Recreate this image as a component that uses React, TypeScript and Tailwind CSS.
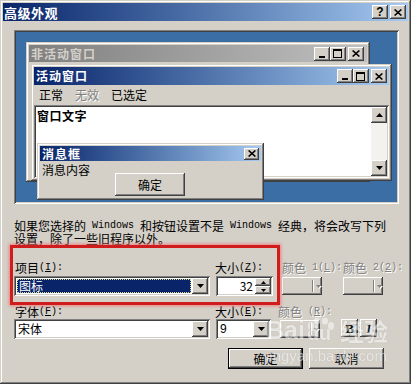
import React from "react";

const F = "font-['Noto_Sans_CJK_SC',sans-serif]";
const MONO = "font-['Liberation_Mono',monospace] text-[10px] leading-none whitespace-pre";
const RAISED =
  "shadow-[inset_-1px_-1px_#404040,inset_1px_1px_#ffffff,inset_-2px_-2px_#808080,inset_2px_2px_#d4d0c8]";
const SUNKEN =
  "shadow-[inset_1px_1px_#808080,inset_-1px_-1px_#ffffff,inset_2px_2px_#404040,inset_-2px_-2px_#d4d0c8]";
const WIN =
  "shadow-[inset_-1px_-1px_#404040,inset_1px_1px_#d4d0c8,inset_-2px_-2px_#808080,inset_2px_2px_#ffffff]";
const DIS = "text-[#808080] [text-shadow:1px_1px_0_#ffffff]";

function M({ children }: { children: React.ReactNode }) {
  return <span className={MONO}>{children}</span>;
}

function Tri({ dir = "down", color = "#000", w = 7, h = 4 }: { dir?: string; color?: string; w?: number; h?: number }) {
  const pts = dir === "down" ? `0,0 ${w},0 ${w / 2},${h}` : `${w / 2},0 ${w},${h} 0,${h}`;
  return (
    <svg width={w} height={h} viewBox={`0 0 ${w} ${h}`} className="block">
      <polygon points={pts} fill={color} />
    </svg>
  );
}

function CloseGlyph() {
  return (
    <svg width="8" height="7" viewBox="0 0 8 7" className="block">
      <path d="M0.6 0.5 L7.4 6.5 M7.4 0.5 L0.6 6.5" stroke="#000" strokeWidth="1.6" fill="none" />
    </svg>
  );
}

function CapBtn({ kind, className = "" }: { kind: "min" | "max" | "close" | "help"; className?: string }) {
  return (
    <div className={`${RAISED} bg-[#d4d0c8] w-[16px] h-[14px] flex items-center justify-center shrink-0 ${className}`}>
      {kind === "close" && <CloseGlyph />}
      {kind === "min" && <div className="w-[6px] h-[2px] bg-black mt-[6px] -ml-[1px]" />}
      {kind === "max" && <div className="w-[9px] h-[9px] border border-black border-t-2 -ml-[1px]" />}
      {kind === "help" && (
        <span className="font-['Liberation_Sans',sans-serif] font-bold text-[12px] leading-none text-black -mt-[1px]">?</span>
      )}
    </div>
  );
}

function Combo({ children, className = "" }: { children: React.ReactNode; className?: string }) {
  return (
    <div className={`${SUNKEN} bg-white p-[2px] flex h-[20px] shrink-0 ${className}`}>
      <div className="flex-1 flex items-center min-w-0">{children}</div>
      <div className={`${RAISED} bg-[#d4d0c8] w-[16px] h-full flex items-center justify-center`}>
        <Tri />
      </div>
    </div>
  );
}

function ColorBtn({ className = "" }: { className?: string }) {
  return (
    <div className={`${RAISED} bg-[#d4d0c8] w-[40px] h-[18px] flex items-center shrink-0 ${className}`}>
      <div className="w-[30px]" />
      <div className="w-[1px] h-[12px] bg-[#808080] shadow-[1px_0_0_#ffffff]" />
      <div className="ml-[3px] relative">
        <div className="absolute left-[1px] top-[1px]">
          <Tri color="#ffffff" w={5} h={3} />
        </div>
        <div className="relative">
          <Tri color="#808080" w={5} h={3} />
        </div>
      </div>
    </div>
  );
}

function Btn({ children, def = false }: { children: React.ReactNode; def?: boolean }) {
  return (
    <div className={`${def ? "border border-black" : ""} w-[75px] h-[21px] shrink-0`}>
      <div className={`${RAISED} bg-[#d4d0c8] w-full h-full flex items-center justify-center text-[12px] leading-none`}>
        {children}
      </div>
    </div>
  );
}

export default function App() {
  return (
    <div className={`relative w-[411px] h-[384px] overflow-hidden bg-[#d4d0c8] p-[3px] ${WIN} ${F} text-[12px] text-black`}>
      {/* Title bar */}
      <div className="h-[18px] flex items-center bg-linear-to-r from-[#0a246a] to-[#a6caf0] pl-[1px] pr-[2px]">
        <span className="text-white font-bold text-[13px] leading-none tracking-[0.5px]">高级外观</span>
        <div className="ml-auto flex gap-[2px]">
          <CapBtn kind="help" />
          <CapBtn kind="close" />
        </div>
      </div>

      <div className="pl-[11px]">
        {/* Preview */}
        <div className={`mt-[9px] w-[385px] h-[174px] p-[2px] ${SUNKEN} bg-[#d4d0c8]`}>
          <div className="relative w-full h-full bg-[#3a6ea5] overflow-hidden">
            {/* inactive window */}
            <div className={`absolute left-[10px] top-[10px] w-[344px] h-[140px] bg-[#d4d0c8] p-[3px] ${WIN}`}>
              <div className="h-[17px] flex items-center bg-linear-to-r from-[#808080] to-[#c0c0c0] pl-[2px] pr-[3px]">
                <span className="font-bold text-[#d4d0c8] text-[12px] leading-none tracking-[1px]">非活动窗口</span>
                <div className="ml-auto flex">
                  <CapBtn kind="min" />
                  <CapBtn kind="max" />
                  <CapBtn kind="close" className="ml-[2px]" />
                </div>
              </div>
            </div>

            {/* active window */}
            <div className={`absolute left-[15px] top-[32px] w-[361px] h-[117px] bg-[#d4d0c8] p-[3px] ${WIN} flex flex-col`}>
              <div className="h-[18px] flex items-center bg-linear-to-r from-[#0a246a] to-[#a6caf0] pl-[2px] pr-[2px] shrink-0">
                <span className="font-bold text-white text-[12px] leading-none tracking-[1px]">活动窗口</span>
                <div className="ml-auto flex">
                  <CapBtn kind="min" />
                  <CapBtn kind="max" />
                  <CapBtn kind="close" className="ml-[2px]" />
                </div>
              </div>
              <div className="h-[20px] flex items-center text-[12px] leading-none shrink-0 pl-[5px]">
                <span>正常</span>
                <span className={`ml-[12px] ${DIS}`}>无效</span>
                <span className="ml-[12px]">已选定</span>
              </div>
              <div className={`flex-1 ${SUNKEN} p-[2px] flex bg-white`}>
                <div className="flex-1 bg-white pl-[1px] pt-[2px] font-bold text-[12px] leading-[13px] tracking-[0.5px]">窗口文字</div>
                <div className="w-[16px] flex flex-col bg-[#f3f2ee]">
                  <div className={`${RAISED} bg-[#d4d0c8] h-[16px] flex items-center justify-center`}>
                    <Tri dir="up" />
                  </div>
                  <div className="flex-1" />
                  <div className={`${RAISED} bg-[#d4d0c8] h-[16px] flex items-center justify-center`}>
                    <Tri />
                  </div>
                </div>
              </div>
            </div>

            {/* message box */}
            <div className={`absolute left-[21px] top-[111px] w-[227px] h-[57px] bg-[#d4d0c8] p-[3px] ${WIN} flex flex-col`}>
              <div className="h-[15px] flex items-center bg-linear-to-r from-[#0a246a] to-[#a6caf0] pl-[2px] pr-[2px] shrink-0">
                <span className="font-bold text-white text-[12px] leading-none tracking-[1px]">消息框</span>
                <div className={`ml-auto ${RAISED} bg-[#d4d0c8] w-[15px] h-[12px] flex items-center justify-center`}>
                  <CloseGlyph />
                </div>
              </div>
              <div className="flex items-start flex-1">
                <span className="pl-[2px] pt-[2px] text-[12px] leading-[14px]">消息内容</span>
                <div className="ml-[25px] mt-[12px]">
                  <div className={`${RAISED} bg-[#d4d0c8] w-[70px] h-[23px] flex items-center justify-center text-[12px] leading-none`}>
                    确定
                  </div>
                </div>
              </div>
            </div>
          </div>
        </div>

        {/* description */}
        <div className="mt-[15px] h-[26px] flex flex-col text-[12px] whitespace-nowrap">
          <div className="h-[13px] flex items-center">
            <span>如果您选择的</span>
            <M>{" Windows "}</M>
            <span>和按钮设置不是</span>
            <M>{" Windows "}</M>
            <span>经典，将会改写下列</span>
          </div>
          <div className="h-[13px] flex items-center">设置，除了一些旧程序以外。</div>
        </div>

        {/* labels row 1 */}
        <div className="mt-[16px] h-[13px] flex items-center text-[12px] whitespace-nowrap">
          <div className="w-[201px] pl-[1px] flex items-center">
            <span>项目</span>
            <M>
              (<u>I</u>):
            </M>
          </div>
          <div className="w-[67px] flex items-center">
            <span>大小</span>
            <M>
              (<u>Z</u>):
            </M>
          </div>
          <div className={`w-[61px] flex items-center ${DIS}`}>
            <span>颜色</span>
            <M>
              {" 1("}
              <u>L</u>
              {"):"}
            </M>
          </div>
          <div className={`flex items-center ${DIS}`}>
            <span>颜色</span>
            <M>
              {" 2("}
              <u>2</u>
              {"):"}
            </M>
          </div>
        </div>

        {/* controls row 1 */}
        <div className="mt-[2px] flex items-start">
          <Combo className="w-[196px]">
            <div className="mx-[1px] h-[14px] flex-1 bg-[#0a246a] text-white border border-dotted border-[#d8d890] flex items-center text-[12px] leading-none pl-[1px]">
              图标
            </div>
          </Combo>
          <div className={`${SUNKEN} bg-white p-[2px] flex h-[20px] w-[57px] ml-[6px] shrink-0`}>
            <div className="flex-1 text-right pr-[2px] text-[12px] leading-[16px]">32</div>
            <div className="w-[16px] flex flex-col">
              <div className={`${RAISED} bg-[#d4d0c8] h-[8px] flex items-center justify-center`}>
                <Tri dir="up" w={5} h={3} />
              </div>
              <div className={`${RAISED} bg-[#d4d0c8] h-[8px] flex items-center justify-center`}>
                <Tri w={5} h={3} />
              </div>
            </div>
          </div>
          <ColorBtn className="ml-[9px] mt-[1px]" />
          <ColorBtn className="ml-[21px] mt-[1px]" />
        </div>

        {/* labels row 2 */}
        <div className="mt-[9px] h-[13px] flex items-center text-[12px] whitespace-nowrap">
          <div className="w-[201px] pl-[1px] flex items-center">
            <span>字体</span>
            <M>
              (<u>F</u>):
            </M>
          </div>
          <div className="w-[63px] flex items-center">
            <span>大小</span>
            <M>
              (<u>E</u>):
            </M>
          </div>
          <div className={`flex items-center ${DIS}`}>
            <span>颜色</span>
            <M>
              {" ("}
              <u>R</u>
              {"):"}
            </M>
          </div>
        </div>

        {/* controls row 2 */}
        <div className="mt-[1px] flex items-start">
          <Combo className="w-[196px]">
            <span className="pl-[2px] text-[12px] leading-none">宋体</span>
          </Combo>
          <Combo className="w-[55px] ml-[6px]">
            <span className="pl-[2px] text-[12px] leading-none font-['Liberation_Sans',sans-serif]">9</span>
          </Combo>
          <ColorBtn className="ml-[9px] mt-[1px]" />
          <div className={`${RAISED} bg-[#d4d0c8] w-[17px] h-[18px] ml-[21px] flex items-center justify-center shrink-0`}>
            <span className="font-['Liberation_Serif',serif] font-bold text-[13px] leading-none">B</span>
          </div>
          <div className={`${RAISED} bg-[#d4d0c8] w-[17px] h-[18px] ml-[2px] flex items-center justify-center shrink-0`}>
            <span className="font-['Liberation_Serif',serif] font-bold italic text-[13px] leading-none">I</span>
          </div>
        </div>

        {/* buttons */}
        <div className="mt-[9px] flex">
          <div className="ml-[214px]">
            <Btn def>确定</Btn>
          </div>
          <div className="ml-[6px]">
            <Btn>取消</Btn>
          </div>
        </div>
      </div>

      {/* red annotation rectangle */}
      <div className="absolute left-[10px] top-[245px] w-[270px] h-[60px] border-[3px] border-[#d01c1c] shadow-[0_0_3px_1px_rgba(240,110,110,0.8)] pointer-events-none" />

      {/* watermark */}
      <div className="absolute left-[266px] top-[318px] pointer-events-none opacity-50 text-white font-['Liberation_Sans',sans-serif]">
        <div className="flex items-end">
          <span className="font-bold text-[25px] leading-none [text-shadow:0_0_1px_#888]">Bai</span>
          <div className="relative w-[32px] h-[25px]">
            <svg width="32" height="25" viewBox="0 0 32 25" className="absolute left-0 top-0">
              <ellipse cx="6" cy="8" rx="3" ry="4" fill="#fff" />
              <ellipse cx="12" cy="3" rx="3" ry="3.5" fill="#fff" />
              <ellipse cx="20" cy="3" rx="3" ry="3.5" fill="#fff" />
              <ellipse cx="26" cy="8" rx="3" ry="4" fill="#fff" />
            </svg>
            <span className="absolute left-[2px] bottom-0 font-bold text-[20px] leading-none [text-shadow:0_0_1px_#888]">du</span>
          </div>
          <span className={`ml-[3px] font-bold text-[24px] leading-none ${F} [text-shadow:0_0_1px_#888]`}>经验</span>
        </div>
        <div className="mt-[5px] text-[15px] leading-none [text-shadow:0_0_1px_#888]">jingyan.baidu.com</div>
      </div>
    </div>
  );
}
